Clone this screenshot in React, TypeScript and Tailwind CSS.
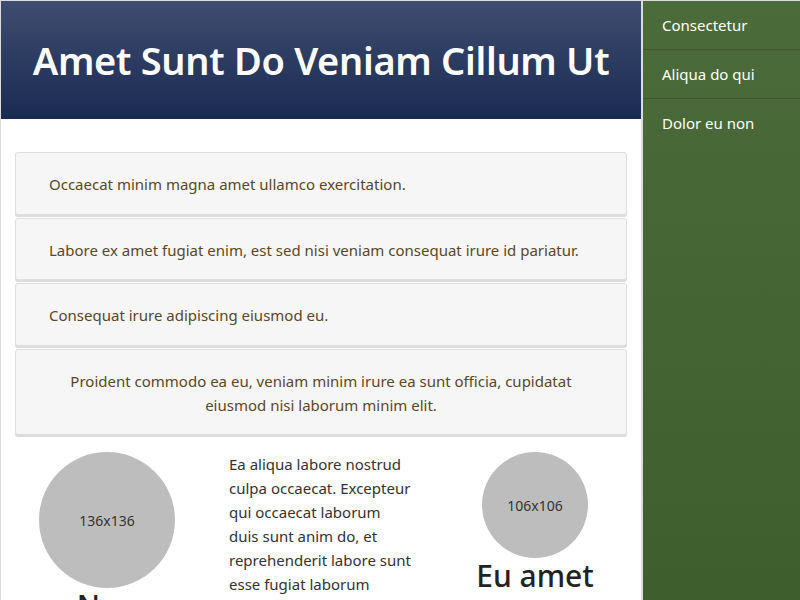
export default function App() {
  const cards = [
    { text: 'Occaecat minim magna amet ullamco exercitation.', center: false },
    { text: 'Labore ex amet fugiat enim, est sed nisi veniam consequat irure id pariatur.', center: false },
    { text: 'Consequat irure adipiscing eiusmod eu.', center: false },
    { text: 'Proident commodo ea eu, veniam minim irure ea sunt officia, cupidatat eiusmod nisi laborum minim elit.', center: true },
  ]
  const nav = ['Consectetur', 'Aliqua do qui', 'Dolor eu non']

  return (
    <div
      className="flex h-[600px] w-[800px] overflow-hidden border-t border-l border-[#dcdcdc] bg-white"
      style={{ fontFamily: '"Noto Sans", "Open Sans", sans-serif' }}
    >
      <main className="w-[641px] shrink-0 border-r border-[#dcdcdc]">
        <header className="flex h-[118px] items-center justify-center bg-gradient-to-b from-[#3e4d6f] to-[#1b2a52]">
          <h1 className="text-[38px] font-semibold tracking-[-0.3px] text-white">Amet Sunt Do Veniam Cillum Ut</h1>
        </header>

        <div className="mx-[14px] mt-[33px] flex flex-col gap-[3px]">
          {cards.map((c, i) => (
            <div
              key={i}
              className={`rounded-[3px] border border-[#dedede] bg-[#f6f6f6] pt-[19px] pb-[17.5px] text-[15px] leading-[24px] text-[#5a4728] shadow-[0_2px_0_#dcdcdc] ${
                c.center ? 'px-[40px] text-center' : 'px-[33px]'
              }`}
            >
              {c.text}
            </div>
          ))}
        </div>

        <div className="mx-[14px] mt-[17px] grid grid-cols-[184px_184px_184px] gap-x-[30px]">
          <div className="flex flex-col items-center">
            <div className="flex h-[136px] w-[136px] items-center justify-center rounded-full bg-[#bdbdbd] text-[14px] text-[#333]">
              136x136
            </div>
            <h2 className="text-[30px] font-medium leading-[36px] text-[#222]">Non</h2>
          </div>
          <p className="text-[15px] leading-[24px] text-[#333]">
            Ea aliqua labore nostrud culpa occaecat. Excepteur qui occaecat laborum duis sunt anim do, et reprehenderit labore sunt esse fugiat laborum
          </p>
          <div className="flex flex-col items-center">
            <div className="flex h-[106px] w-[106px] items-center justify-center rounded-full bg-[#bdbdbd] text-[14px] text-[#333]">
              106x106
            </div>
            <h2 className="text-[30px] font-medium leading-[36px] text-[#222]">Eu amet</h2>
          </div>
        </div>
      </main>

      <aside className="flex-1 border-l border-[#dcdcdc] bg-gradient-to-b from-[#4b6c3a] to-[#3e5f2d]">
        {nav.map((n, i) => (
          <div
            key={n}
            className={`flex h-[49px] items-center px-[19px] text-[15px] text-white ${
              i < nav.length - 1 ? 'border-b border-[#40592f]' : ''
            }`}
          >
            {n}
          </div>
        ))}
      </aside>
    </div>
  )
}
